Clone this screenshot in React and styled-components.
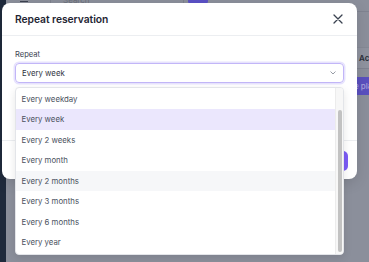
import React from "react";
import styled, { createGlobalStyle } from "styled-components";

const Global = createGlobalStyle`
  html, body { margin: 0; padding: 0; }
  body { font-family: Inter, "Noto Sans", sans-serif; width: 369px; height: 262px; overflow: hidden; }
  * { box-sizing: border-box; }
`;

const Screen = styled.div`
  position: relative;
  width: 369px;
  height: 262px;
  display: flex;
  overflow: hidden;
  background: #8b8f9b;
`;

const Sidebar = styled.div`
  width: 6px;
  flex: none;
  background: #1f2a3c;
`;

const Main = styled.div`
  flex: 1;
  display: flex;
  flex-direction: column;
`;

const TopBar = styled.div`
  height: 12px;
  display: flex;
  align-items: flex-start;
  border-bottom: 1px solid #7f8390;
`;

const Hamburger = styled.div`
  width: 8px;
  height: 1px;
  margin: 1px 0 0 14px;
  background: #3c4250;
`;

const SearchBox = styled.div`
  margin-left: 22px;
  width: 134px;
  height: 12px;
  border-left: 1px solid #7d818d;
  border-right: 1px solid #7d818d;
  font-size: 8px;
  line-height: 8px;
  color: #6b6f7a;
  padding-left: 12px;
  margin-top: -4px;
`;

const NewButton = styled.div`
  margin-left: 4px;
  width: 20px;
  height: 4px;
  background: #5b51c6;
  border-radius: 0 0 3px 3px;
`;

const Table = styled.div`
  margin-top: 35px;
  display: grid;
  grid-template-columns: 346px 1fr;
`;

const HeadCell = styled.div`
  height: 22px;
  border-top: 1px solid #858995;
  border-bottom: 1px solid #7f8390;
  background: #8f939f;
  font-size: 8px;
  font-weight: 600;
  color: #2a2e37;
  line-height: 20px;
  padding-left: 7px;
  white-space: nowrap;
  overflow: hidden;
`;

const Band = styled.div`
  margin-top: 8px;
  height: 18px;
  background: #5a50bf;
  font-size: 8px;
  font-weight: 500;
  color: #a9a3dc;
  line-height: 18px;
  white-space: nowrap;
  overflow: hidden;
  padding-left: ${(p) => p.$pad || 0}px;
`;

const Modal = styled.div`
  position: absolute;
  left: 2px;
  top: 3px;
  width: 355px;
  height: 176px;
  background: #fff;
  border-radius: 8px;
  display: flex;
  flex-direction: column;
  box-shadow: 0 4px 14px rgba(0, 0, 0, 0.12);
`;

const ModalHeader = styled.div`
  height: 33px;
  flex: none;
  display: flex;
  align-items: center;
  justify-content: space-between;
  padding: 0 14px 0 13px;
  border-bottom: 1px solid #eceef1;
`;

const Title = styled.h2`
  margin: 0;
  font-size: 10.3px;
  font-weight: 600;
  color: #1f2633;
  letter-spacing: -0.05px;
`;

const CloseButton = styled.button`
  border: none;
  background: none;
  padding: 0;
  width: 11px;
  height: 11px;
  display: flex;
  align-items: center;
  justify-content: center;
  margin-top: -1px;
`;

const ModalBody = styled.div`
  flex: 1;
  display: flex;
  flex-direction: column;
  gap: 3px;
  padding: 14px 13px 0 13px;
`;

const Label = styled.label`
  font-size: 7.6px;
  line-height: 10px;
  color: #3d4452;
`;

const Select = styled.div`
  height: 20px;
  border: 1px solid #c2b6f8;
  box-shadow: 0 0 0 1.5px #e7e3fd;
  border-radius: 4px;
  display: flex;
  align-items: center;
  justify-content: space-between;
  padding: 0 7px 0 6px;
  font-size: 7.8px;
  color: #2f3643;
`;

const ModalFooter = styled.div`
  height: 39px;
  flex: none;
  border-top: 1px solid #eceef1;
  display: flex;
  align-items: center;
  justify-content: flex-end;
  padding: 0 9px 0 0;
`;

const PrimaryButton = styled.button`
  height: 20px;
  width: 60px;
  border: none;
  border-radius: 5px;
  background: #7c5cf6;
  margin-top: 2px;
`;

const Dropdown = styled.div`
  position: absolute;
  left: 15px;
  top: 87px;
  width: 329px;
  height: 168px;
  background: #fff;
  border: 1px solid #e3e5e9;
  border-radius: 4px;
  box-shadow: 0 3px 8px rgba(0, 0, 0, 0.1);
  display: flex;
  overflow: hidden;
`;

const Options = styled.ul`
  flex: 1;
  margin: 0;
  padding: 0.5px 0 0 0;
  list-style: none;
`;

const Option = styled.li`
  height: 20.5px;
  line-height: 20.5px;
  padding-left: 5.5px;
  font-size: 7.8px;
  color: #4a5160;
  background: ${(p) => (p.$selected ? "#ebe7fd" : p.$hover ? "#f6f7f9" : "transparent")};
`;

const Track = styled.div`
  width: 8px;
  flex: none;
  background: #f7f7f7;
  border-left: 1px solid #ececec;
  padding: 22px 1.5px 2px 1.5px;
  display: flex;
`;

const Thumb = styled.div`
  flex: 1;
  background: #c2c2c2;
  border-radius: 2px;
`;

const options = [
  "Every weekday",
  "Every week",
  "Every 2 weeks",
  "Every month",
  "Every 2 months",
  "Every 3 months",
  "Every 6 months",
  "Every year",
];

export default function App() {
  return (
    <>
      <Global />
      <Screen>
        <Sidebar />
        <Main>
          <TopBar>
            <Hamburger />
            <SearchBox>Search</SearchBox>
            <NewButton />
          </TopBar>
          <Table>
            <HeadCell />
            <HeadCell>Actions</HeadCell>
            <Band />
            <Band $pad={2}>e place</Band>
          </Table>
        </Main>

        <Modal>
          <ModalHeader>
            <Title>Repeat reservation</Title>
            <CloseButton aria-label="Close">
              <svg width="10" height="10" viewBox="0 0 10 10">
                <path d="M1 1 L9 9 M9 1 L1 9" stroke="#3a4250" strokeWidth="1.3" strokeLinecap="round" />
              </svg>
            </CloseButton>
          </ModalHeader>
          <ModalBody>
            <Label>Repeat</Label>
            <Select>
              <span>Every week</span>
              <svg width="6" height="4" viewBox="0 0 6 4">
                <path d="M0.8 0.8 L3 3 L5.2 0.8" fill="none" stroke="#8a909b" strokeWidth="0.9" strokeLinecap="round" strokeLinejoin="round" />
              </svg>
            </Select>
          </ModalBody>
          <ModalFooter>
            <PrimaryButton />
          </ModalFooter>
        </Modal>

        <Dropdown>
          <Options>
            {options.map((o) => (
              <Option key={o} $selected={o === "Every week"} $hover={o === "Every 2 months"}>
                {o}
              </Option>
            ))}
          </Options>
          <Track>
            <Thumb />
          </Track>
        </Dropdown>
      </Screen>
    </>
  );
}
